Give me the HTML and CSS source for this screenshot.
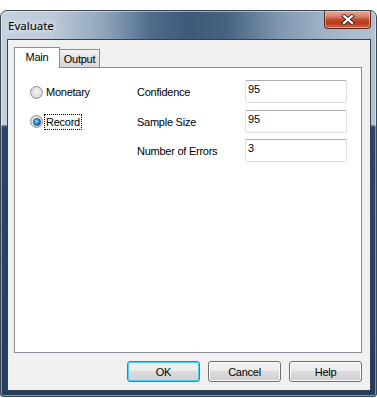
FILE: index.html
```html
<!DOCTYPE html>
<html>
<head>
  <title>Evaluate</title>
  <link rel="stylesheet" href="styles.css">
</head>
<body>
<div class="window">
  <div class="titlebar">
    <span class="title">Evaluate</span>
    <span class="close-btn">
      <svg width="14" height="11" viewBox="0 0 14 11">
        <path d="M3 2 L11 9 M11 2 L3 9" stroke="#3a2a2a" stroke-width="4" stroke-linecap="square"/>
        <path d="M3 2 L11 9 M11 2 L3 9" stroke="#ffffff" stroke-width="2.2" stroke-linecap="square"/>
      </svg>
    </span>
  </div>

  <div class="client">
    <div class="tabs">
      <span class="tab tab-active">Main</span>
      <span class="tab">Output</span>
    </div>

    <div class="panel">
      <div class="form-grid">
        <label class="radio">
          <span class="radio-dot"></span>
          <span class="radio-text">Monetary</span>
        </label>
        <label class="field-label" for="confidence">Confidence</label>
        <input class="field" type="text" id="confidence" value="95">

        <label class="radio radio-checked">
          <span class="radio-dot"></span>
          <span class="radio-text radio-focus">Record</span>
        </label>
        <label class="field-label" for="sample">Sample Size</label>
        <input class="field" type="text" id="sample" value="95">

        <span></span>
        <label class="field-label" for="errors">Number of Errors</label>
        <input class="field" type="text" id="errors" value="3">
      </div>
    </div>

    <div class="buttons">
      <button class="btn btn-default">OK</button>
      <button class="btn">Cancel</button>
      <button class="btn">Help</button>
    </div>
  </div>
</div>
</body>
</html>
```

FILE: styles.css
```css
body {
  margin: 0;
  background: #ffffff;
  font-family: "Liberation Sans", Arial, sans-serif;
  font-size: 11px;
  letter-spacing: -0.25px;
  color: #000000;
}

/* window frame */
.window {
  margin-top: 10px;
  width: 377px;
  height: 387px;
  box-sizing: border-box;
  border: 1px solid #3d4856;
  border-radius: 7px 7px 3px 3px;
  padding: 0 5px 5px 6px;
  display: flex;
  flex-direction: column;
  box-shadow: inset 0 0 0 1px rgba(255, 255, 255, 0.45);
  background:
    linear-gradient(to bottom, transparent 114px, #8aa2bd 114px, #2a4769 116px, #223d60 100%),
    linear-gradient(to right, #c4d1de 0, #bccad8 14%, #8ea3ba 28%, #4f6b8b 40%, #3d5a7b 50%, #45627f 60%, #7f96af 74%, #9fb2c6 86%, #b3c2d2 100%);
}

.titlebar {
  height: 28px;
  display: flex;
  justify-content: space-between;
  align-items: flex-start;
}

.title {
  font-family: "Noto Sans", "Open Sans", sans-serif;
  font-size: 11.5px;
  letter-spacing: 0;
  line-height: 16px;
  margin: 7px 0 0 1px;
  text-shadow: 0 0 6px rgba(255, 255, 255, 0.9), 0 0 10px rgba(255, 255, 255, 0.6);
}

.close-btn {
  width: 47px;
  height: 18px;
  box-sizing: border-box;
  border: 1px solid #5b2a22;
  border-top: none;
  border-radius: 0 0 4px 4px;
  display: flex;
  align-items: center;
  justify-content: center;
  background: linear-gradient(to bottom, #e9a896 0, #d77e67 35%, #c44a2f 50%, #b8371c 70%, #d4694c 100%);
  box-shadow: inset 0 0 0 1px rgba(255, 220, 210, 0.5);
}

/* client area */
.client {
  flex: 1;
  border: 1px solid #34414f;
  background: #f0f0f0;
  padding: 7px 8px 8px 6px;
  display: flex;
  flex-direction: column;
}

.tabs {
  height: 20px;
  display: flex;
  align-items: flex-end;
}

.tab {
  width: 40px;
  height: 18px;
  box-sizing: border-box;
  border: 1px solid #898c95;
  border-left: none;
  border-bottom: none;
  text-align: center;
  line-height: 18px;
  background: linear-gradient(to bottom, #f3f3f3, #e2e2e2 50%, #d9d9d9);
}

.tab-active {
  position: relative;
  z-index: 1;
  width: 46px;
  height: 21px;
  margin-bottom: -1px;
  border-left: 1px solid #898c95;
  background: #ffffff;
  line-height: 19px;
}

.panel {
  height: 286px;
  box-sizing: border-box;
  border: 1px solid #898c95;
  background: #ffffff;
  padding: 12px 0 0 15px;
}

.form-grid {
  display: grid;
  grid-template-columns: 107px 108px 102px;
  grid-template-rows: 24px 23px 23px;
  row-gap: 6px;
  align-items: center;
}

.radio {
  display: flex;
  align-items: center;
}

.radio-dot {
  width: 13px;
  height: 13px;
  box-sizing: border-box;
  border-radius: 50%;
  border: 1px solid #8f8f8f;
  background: radial-gradient(circle at 50% 45%, #f4f4f4 0, #dedede 55%, #cfcfcf 100%);
  display: flex;
  align-items: center;
  justify-content: center;
}

.radio-checked .radio-dot::after {
  content: "";
  width: 6px;
  height: 6px;
  border-radius: 50%;
  border: 1px solid #1d4d7e;
  background: radial-gradient(circle at 40% 35%, #9ad9ff 0, #2f8ee0 45%, #0c4a8c 100%);
}

.radio-text {
  margin-left: 1px;
  padding: 0 1px;
  line-height: 14px;
  border: 1px dotted transparent;
}

.radio-focus {
  border-color: #000000;
}

.field-label {
  line-height: 14px;
}

.field {
  align-self: start;
  width: 102px;
  height: 23px;
  box-sizing: border-box;
  margin: 0;
  padding: 0 2px 5px;
  border: 1px solid #dbdfe6;
  border-top-color: #abadb3;
  border-radius: 2px;
  font-family: "Liberation Sans", Arial, sans-serif;
  font-size: 11px;
  color: #000000;
  background: #ffffff;
}

/* buttons */
.buttons {
  margin-top: 8px;
  display: flex;
  justify-content: flex-end;
  gap: 8px;
}

.btn {
  width: 73px;
  height: 21px;
  box-sizing: border-box;
  padding: 0;
  border: 1px solid #707070;
  border-radius: 3px;
  font-family: "Liberation Sans", Arial, sans-serif;
  font-size: 11px;
  letter-spacing: -0.25px;
  color: #000000;
  background: linear-gradient(to bottom, #f2f2f2 0, #ebebeb 50%, #dddddd 50%, #cfcfcf 100%);
  box-shadow: inset 0 0 0 1px #fcfcfc;
}

.btn-default {
  border-color: #3c7fb1;
  box-shadow: inset 0 0 0 1px #48d0f6;
}
```
